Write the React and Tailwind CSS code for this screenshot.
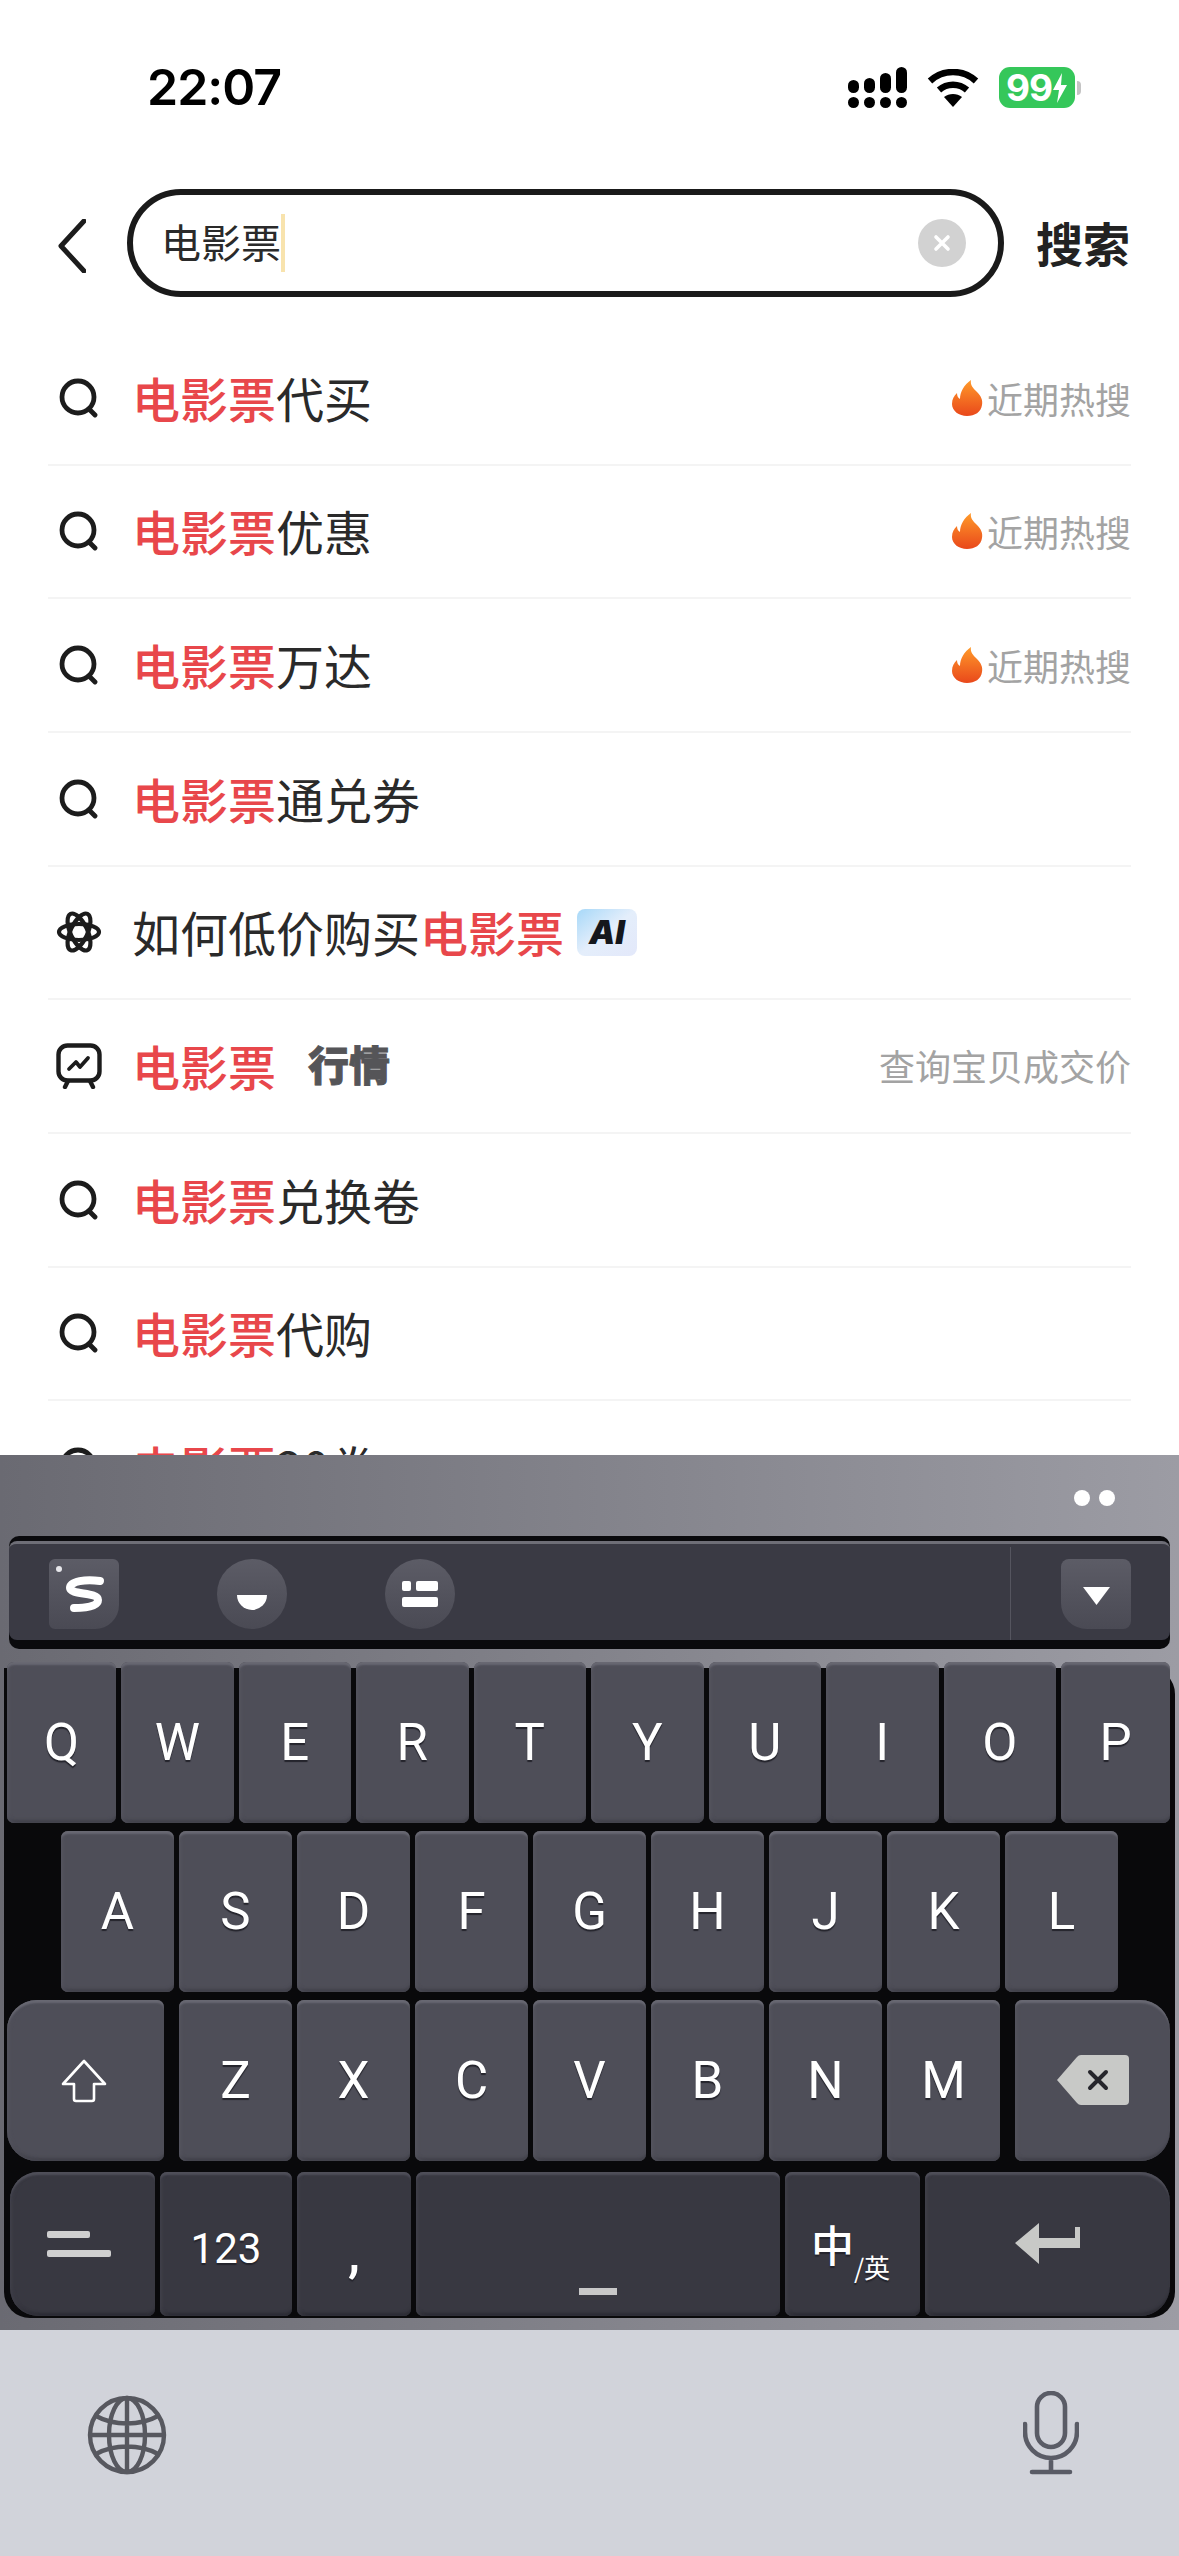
const cjk = "font-['Noto_Sans_CJK_SC',sans-serif]";
const latin = "font-['Roboto',sans-serif]";

function SearchIcon() {
  return (
    <svg width="40" height="40" viewBox="0 0 40 40" fill="none" stroke="#1c1c1c" strokeWidth="4.8" strokeLinecap="round">
      <circle cx="19" cy="19" r="16" />
      <path d="M30 31l6 6" />
    </svg>
  );
}

function AtomIcon() {
  return (
    <svg width="46" height="46" viewBox="0 0 46 46" fill="none" stroke="#1c1c1c" strokeWidth="4.2">
      <ellipse cx="23" cy="23" rx="8.5" ry="20" transform="rotate(25 23 23)" />
      <ellipse cx="23" cy="23" rx="8.5" ry="20" transform="rotate(-25 23 23)" />
      <ellipse cx="23" cy="23" rx="8" ry="20" transform="rotate(90 23 23)" />
    </svg>
  );
}

function TvIcon() {
  return (
    <svg width="46" height="46" viewBox="0 0 46 46" fill="none" stroke="#1c1c1c" strokeWidth="4.4" strokeLinecap="round" strokeLinejoin="round">
      <rect x="2.5" y="2.5" width="41" height="35" rx="9" />
      <path d="M12 38l-3 6M34 38l3 6" />
      <path d="M13 26l7-7 4 5 8-9" strokeWidth="3.8" />
    </svg>
  );
}

function Flame() {
  return (
    <svg width="32" height="36" viewBox="0 0 32 36">
      <defs>
        <linearGradient id="flame" x1="0" y1="0" x2="0" y2="1">
          <stop offset="0" stopColor="#ff9a2a" />
          <stop offset="1" stopColor="#e9481b" />
        </linearGradient>
      </defs>
      <path d="M20 0c-1 5 2 8 6 12 4 4 6 8 5 13-1 7-7 11-15 11S1 31 1 24c0-5 2-8 5-11 0 3 1 5 3 6 0-7 4-14 11-19z" fill="url(#flame)" />
    </svg>
  );
}

function Hot() {
  return (
    <div className="flex items-center gap-1 text-[36px] leading-none text-[#a3a3a3]">
      <Flame />
      <span>近期热搜</span>
    </div>
  );
}

function Red({ children }) {
  return <span className="font-medium text-[#e8474b]">{children}</span>;
}

const rows = [
  { icon: <SearchIcon />, text: <><Red>电影票</Red>代买</>, right: <Hot /> },
  { icon: <SearchIcon />, text: <><Red>电影票</Red>优惠</>, right: <Hot /> },
  { icon: <SearchIcon />, text: <><Red>电影票</Red>万达</>, right: <Hot /> },
  { icon: <SearchIcon />, text: <><Red>电影票</Red>通兑券</> },
  {
    icon: <AtomIcon />,
    text: <>如何低价购买<Red>电影票</Red></>,
    after: (
      <div className="ml-[13px] flex h-[47px] w-[60px] items-center justify-center rounded-[8px] bg-linear-to-br from-[#a6d8f8] via-[#e4eefb] to-[#e3e8fa]">
        <span className="font-['Inter',sans-serif] text-[33px] font-black italic leading-none text-[#15171c]">AI</span>
      </div>
    ),
  },
  {
    icon: <TvIcon />,
    text: <Red>电影票</Red>,
    after: <span className="-mt-[6px] ml-[32px] text-[41px] font-black leading-none text-[#555558] [-webkit-text-stroke:0.8px_#555558]">行情</span>,
    right: <span className="-mt-[3px] text-[36px] leading-none text-[#a3a3a3]">查询宝贝成交价</span>,
  },
  { icon: <SearchIcon />, text: <><Red>电影票</Red>兑换卷</> },
  { icon: <SearchIcon />, text: <><Red>电影票</Red>代购</> },
  { icon: <SearchIcon />, text: <><Red>电影票</Red>20券</> },
];

function Signal() {
  const tops = ['h-[13px]', 'h-[15px]', 'h-[20px]', 'h-[26px]'];
  return (
    <div className="flex items-end gap-[5px]">
      {tops.map((h) => (
        <div key={h} className="flex w-[11px] flex-col gap-[4px]">
          <div className={`${h} rounded-full bg-black`} />
          <div className="h-[11px] rounded-full bg-black" />
        </div>
      ))}
    </div>
  );
}

function Wifi() {
  return (
    <svg width="52" height="38" viewBox="0 0 52 38" fill="none" stroke="#000" strokeWidth="6.5">
      <path d="M3 12C16 0 36 0 49 12" />
      <path d="M12 21c8-7 20-7 28 0" />
      <path d="M26 38L17 28c5-4 13-4 18 0z" fill="#000" stroke="none" />
    </svg>
  );
}

function Battery() {
  return (
    <div className="flex items-center gap-[2px]">
      <div className="flex h-[41px] w-[76px] items-center justify-center rounded-[11px] bg-[#35c75a]">
        <span className="font-['Inter',sans-serif] text-[37px] font-bold leading-none tracking-[-1px] text-white">99</span>
        <svg width="16" height="30" viewBox="0 0 16 30" fill="#fff">
          <path d="M10 0L1 17h6l-2 13 10-18H9z" />
        </svg>
      </div>
      <div className="h-[14px] w-[4px] rounded-r-full bg-[#c4c4c4]" />
    </div>
  );
}

function Key({ children, className = '', dark = false }) {
  const tone = dark
    ? 'bg-[#383841] shadow-[inset_0_4px_2px_-1px_#4f4f59,inset_3px_0_4px_-2px_#44444e,inset_0_-5px_3px_-2px_#2c2c34]'
    : 'bg-[#4e4e58] shadow-[inset_0_4px_2px_-1px_#686872,inset_3px_0_4px_-2px_#585862,inset_0_-5px_3px_-2px_#41414a]';
  return (
    <div className={`relative flex items-center justify-center rounded-[7px] text-white [text-shadow:0_2px_1px_#24242c] ${tone} ${className}`}>
      {children}
    </div>
  );
}

function Letter({ ch, className = '' }) {
  return (
    <Key className={`h-[161px] ${className}`}>
      <span className={`${latin} text-[51px] leading-none`}>{ch}</span>
    </Key>
  );
}

function Toolbar() {
  return (
    <div className="mx-[9px] h-[113px] rounded-[10px] bg-[#0a0a0d] pb-[9px] pt-[5px]">
      <div className="flex h-full items-center rounded-[8px] border-t-[3px] border-[#6e6e77] bg-[#3a3a44] pl-[40px] pt-[3px]">
        <div className="relative flex h-[70px] w-[70px] items-center justify-center rounded-[6px] rounded-br-[24px] bg-linear-to-b from-[#5c5c66] to-[#4a4a54]">
          <div className="absolute left-[7px] top-[7px] h-[6px] w-[6px] rounded-full bg-[#e8e8ec]" />
          <svg width="44" height="38" viewBox="0 0 44 38" fill="none" stroke="#fff" strokeWidth="8" strokeLinecap="round">
            <path d="M38 6C24 4 8 6 8 13c0 7 28 4 28 12 0 7-14 8-24 8" />
          </svg>
        </div>
        <div className="ml-[98px] flex h-[70px] w-[70px] items-center justify-center rounded-full bg-linear-to-b from-[#5c5c66] to-[#4a4a54] pt-[18px]">
          <div className="h-[15px] w-[30px] rounded-b-full bg-white" />
        </div>
        <div className="ml-[98px] flex h-[70px] w-[70px] flex-col items-center justify-center gap-[6px] rounded-full bg-linear-to-b from-[#5c5c66] to-[#4a4a54]">
          <div className="flex gap-[5px]">
            <div className="h-[10px] w-[9px] rounded-[2px] bg-white" />
            <div className="h-[10px] w-[22px] rounded-[2px] bg-white" />
          </div>
          <div className="h-[10px] w-[36px] rounded-[2px] bg-white" />
        </div>
        <div className="ml-auto flex h-full w-[160px] items-center border-l border-[#55555f] pl-[50px]">
          <div className="flex h-[70px] w-[70px] items-center justify-center rounded-[8px] rounded-bl-[26px] bg-linear-to-b from-[#5c5c66] to-[#4a4a54] pt-[4px]">
            <svg width="27" height="18" viewBox="0 0 27 18" fill="#fff">
              <path d="M0 0h27L13.5 18z" />
            </svg>
          </div>
        </div>
      </div>
    </div>
  );
}

export default function App() {
  return (
    <div className={`flex h-[2556px] w-[1179px] flex-col overflow-hidden bg-white ${cjk}`}>
      {/* status bar and search */}
      <div className="h-[1455px] overflow-hidden">
        <div className="flex h-[189px] items-start justify-between pl-[147px] pr-[98px] pt-[67px]">
          <span className="font-['Inter',sans-serif] text-[50px] font-semibold leading-[41px] tracking-[-1px] text-black">22:07</span>
          <div className="flex items-center gap-[20px]">
            <Signal />
            <Wifi />
            <Battery />
          </div>
        </div>

        <div className="flex items-center pl-[58px] pr-[49px]">
          <svg className="mt-[5px]" width="28" height="54" viewBox="0 0 28 54" fill="none" stroke="#1c1c1c" strokeWidth="5" strokeLinecap="round" strokeLinejoin="round">
            <path d="M26 2L3 27l23 25" />
          </svg>
          <div className="ml-[41px] flex h-[108px] w-[877px] items-center justify-between rounded-full border-[6px] border-[#1a1a1a] pl-[28px] pr-[32px]">
            <div className="flex items-center">
              <span className="-mt-[4px] text-[40px] leading-none text-[#2a2a2a]">电影票</span>
              <div className="h-[58px] w-[4px] bg-[#f8e3ad]" />
            </div>
            <div className="flex h-[48px] w-[48px] items-center justify-center rounded-full bg-[#d2d2d2]">
              <svg width="20" height="20" viewBox="0 0 20 20" stroke="#fff" strokeWidth="3.6" strokeLinecap="round">
                <path d="M4 4l12 12M16 4L4 16" />
              </svg>
            </div>
          </div>
          <span className="-mt-[4px] ml-[32px] text-[47px] font-bold leading-none text-[#222]">搜索</span>
        </div>

        <div className="mx-[48px] mt-[35px]">
          {rows.map((row, i) => (
            <div key={i} className="flex h-[133.67px] items-center border-b-2 border-[#f4f4f4]">
              <div className="flex w-[62px] justify-center">{row.icon}</div>
              <div className="ml-[22px] flex flex-1 items-center">
                <span className="-mt-[2px] text-[48px] leading-none text-[#2a2a2a]">{row.text}</span>
                {row.after}
              </div>
              {row.right}
            </div>
          ))}
        </div>
      </div>

      {/* keyboard */}
      <div className="flex h-[875px] flex-col bg-linear-to-r from-[#6a6a72] to-[#9c9ca4]">
        <div className="flex h-[81px] items-center justify-end gap-[9px] pr-[64px] pt-[5px]">
          <div className="h-[16px] w-[16px] rounded-full bg-white" />
          <div className="h-[16px] w-[16px] rounded-full bg-white" />
        </div>
        <Toolbar />

        <div className="mx-[4px] mt-[19px] flex h-[650px] flex-col rounded-b-[26px] rounded-tr-[26px] bg-[#09090b]">
          <div className="-mt-[6px] flex gap-[5px] pl-[3px] pr-[5px]">
            {'QWERTYUIOP'.split('').map((ch, i) => (
              <Letter key={ch} ch={ch} className={i === 0 || i === 9 ? 'w-[109px] shrink-0' : 'flex-1'} />
            ))}
          </div>

          <div className="mt-[8px] flex gap-[5px] pl-[57px]">
            {'ASDFGHJKL'.split('').map((ch) => (
              <Letter key={ch} ch={ch} className="w-[113px]" />
            ))}
          </div>

          <div className="mt-[8px] flex gap-[5px] pl-[3px] pr-[5px]">
            <Key className="mr-[10px] h-[161px] w-[157px] rounded-bl-[30px] rounded-tl-[30px]">
              <svg className="-ml-[3px]" width="46" height="44" viewBox="0 0 46 44" fill="none" stroke="#fff" strokeWidth="2.6" strokeLinejoin="round">
                <path d="M23 2L2 25h11v15a2 2 0 0 0 2 2h16a2 2 0 0 0 2-2V25h11z" />
              </svg>
            </Key>
            {'ZXCVBNM'.split('').map((ch) => (
              <Letter key={ch} ch={ch} className="w-[113px]" />
            ))}
            <Key className="ml-[10px] h-[161px] flex-1 rounded-br-[30px] rounded-tr-[30px]">
              <svg width="72" height="52" viewBox="0 0 72 52">
                <path d="M0 25L20 2a6 6 0 0 1 4-2h44a4 4 0 0 1 4 4v42a4 4 0 0 1-4 4H24a6 6 0 0 1-4-2z" fill="#c8c9c7" />
                <path d="M33 17l16 16M49 17L33 33" stroke="#26262c" strokeWidth="4" strokeLinecap="round" />
              </svg>
            </Key>
          </div>

          <div className="mt-[11px] flex gap-[5px] pl-[6px] pr-[5px]">
            <Key dark className="h-[144px] w-[145px] flex-col items-start gap-[12px] rounded-bl-[28px] rounded-tl-[28px] pl-[37px]">
              <div className="h-[7px] w-[43px] rounded-[2px] bg-[#cfcfcf]" />
              <div className="h-[7px] w-[64px] rounded-[2px] bg-[#cfcfcf]" />
            </Key>
            <Key dark className="h-[144px] w-[132px]">
              <span className={`${latin} pt-[10px] text-[42px] leading-none`}>123</span>
            </Key>
            <Key dark className="h-[144px] w-[114px]">
              <span className={`${latin} pt-[18px] text-[54px] font-medium leading-none`}>,</span>
            </Key>
            <Key dark className="h-[144px] w-[364px] items-end pb-[21px]">
              <div className="h-[7px] w-[38px] bg-[#c8c8c8]" />
            </Key>
            <Key dark className="h-[144px] w-[135px] items-start pr-[4px]">
              <span className="mt-[50px] text-[43px] font-medium leading-none">中</span>
              <span className="mt-[82px] text-[26px] leading-none">/英</span>
            </Key>
            <Key dark className="h-[144px] flex-1 rounded-br-[30px] rounded-tr-[30px]">
              <svg width="66" height="42" viewBox="0 0 66 42" fill="#c8c9c7">
                <path d="M0 20L24 0v15h36V4h5v21H24v16z" />
              </svg>
            </Key>
          </div>
        </div>
      </div>

      {/* globe and mic */}
      <div className="flex flex-1 items-start justify-between bg-[#d1d3da] pl-[87px] pr-[100px] pt-[61px]">
        <svg className="mt-[4px]" width="80" height="80" viewBox="0 0 80 80" fill="none" stroke="#57585f" strokeWidth="4.4">
          <circle cx="40" cy="40" r="37" />
          <ellipse cx="40" cy="40" rx="18" ry="37" />
          <path d="M40 3v74M3 40h74M9 21c18 10 44 10 62 0M9 59c18-10 44-10 62 0" />
        </svg>
        <svg width="56" height="84" viewBox="0 0 56 84" fill="none" stroke="#5a5c66" strokeWidth="4.6" strokeLinecap="round">
          <rect x="14" y="2" width="28" height="54" rx="14" />
          <path d="M2 33v8a26 26 0 0 0 52 0v-8M28 67v14M9 81h38" />
        </svg>
      </div>
    </div>
  );
}
